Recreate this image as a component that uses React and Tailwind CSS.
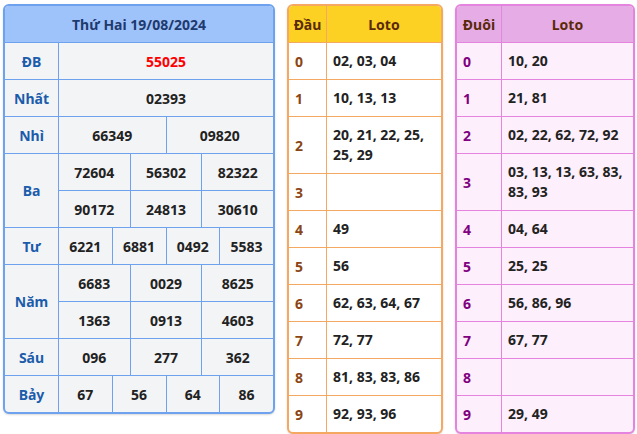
const font = { fontFamily: '"Noto Sans", "Open Sans", sans-serif' };

const prizes = [
  { label: 'ĐB', rows: [['55025']], red: true },
  { label: 'Nhất', rows: [['02393']] },
  { label: 'Nhì', rows: [['66349', '09820']] },
  { label: 'Ba', rows: [['72604', '56302', '82322'], ['90172', '24813', '30610']] },
  { label: 'Tư', rows: [['6221', '6881', '0492', '5583']] },
  { label: 'Năm', rows: [['6683', '0029', '8625'], ['1363', '0913', '4603']] },
  { label: 'Sáu', rows: [['096', '277', '362']] },
  { label: 'Bảy', rows: [['67', '56', '64', '86']] },
];

const dau = [
  '02, 03, 04', '10, 13, 13', '20, 21, 22, 25, 25, 29', '', '49',
  '56', '62, 63, 64, 67', '72, 77', '81, 83, 83, 86', '92, 93, 96',
];

const duoi = [
  '10, 20', '21, 81', '02, 22, 62, 72, 92', '03, 13, 13, 63, 83, 83, 93', '04, 64',
  '25, 25', '56, 86, 96', '67, 77', '', '29, 49',
];

function ResultTable() {
  return (
    <div className="w-[272px] border-2 border-[#6ea1ee] rounded-md overflow-hidden bg-[#f3f4f6] shadow-[0_1px_2px_rgba(0,0,0,0.15)]">
      <div className="h-[37px] flex items-center justify-center bg-[#9ec2fa] border-b border-[#6ea1ee] text-[14px] font-bold text-[#1e3a6e]">
        Thứ Hai 19/08/2024
      </div>
      {prizes.map((p, i) => (
        <div key={p.label} className={`flex ${i < prizes.length - 1 ? 'border-b border-[#6ea1ee]' : ''}`}>
          <div className="w-[54px] shrink-0 border-r border-[#6ea1ee] flex items-center justify-center text-[14px] font-bold text-[#1b5cab]">
            {p.label}
          </div>
          <div className="flex-1 flex flex-col">
            {p.rows.map((r, ri) => (
              <div key={ri} className={`flex h-[36px] ${ri < p.rows.length - 1 ? 'border-b border-[#6ea1ee] h-[37px]' : ''}`}>
                {r.map((n, ni) => (
                  <div
                    key={ni}
                    className={`flex-1 flex items-center justify-center text-[14px] font-bold ${p.red ? 'text-[#ff0000]' : 'text-[#222]'} ${ni < r.length - 1 ? 'border-r border-[#6ea1ee]' : ''}`}
                  >
                    {n}
                  </div>
                ))}
              </div>
            ))}
          </div>
        </div>
      ))}
    </div>
  );
}

function LotoTable({ title, data, width, col1, border, headBg, bodyBg, numColor }) {
  return (
    <div className={`${width} border-2 ${border} rounded-md overflow-hidden ${bodyBg} shadow-[0_1px_2px_rgba(0,0,0,0.15)]`}>
      <div className={`flex h-[37px] ${headBg} border-b ${border} text-[14px] font-bold text-[#5a2a08]`}>
        <div className={`${col1} shrink-0 border-r ${border} flex items-center justify-center`}>{title}</div>
        <div className="flex-1 flex items-center justify-center">Loto</div>
      </div>
      {data.map((v, i) => (
        <div key={i} className={`flex ${i < data.length - 1 ? `border-b ${border}` : ''}`}>
          <div className={`${col1} shrink-0 border-r ${border} flex items-center pl-[6px] text-[14px] font-bold ${numColor}`}>{i}</div>
          <div className="flex-1 px-[6px] py-[8px] min-h-[36px] text-[14px] leading-[20px] font-bold text-[#222]">{v}</div>
        </div>
      ))}
    </div>
  );
}

export default function App() {
  return (
    <div className="flex items-start gap-[12px] pl-[3px] pt-[4px] bg-white w-[637px] h-[434px]" style={font}>
      <ResultTable />
      <LotoTable
        title="Đầu"
        data={dau}
        width="w-[156px]"
        col1="w-[38px]"
        border="border-[#f4a862]"
        headBg="bg-[#fdd124]"
        bodyBg="bg-white"
        numColor="text-[#8b4513]"
      />
      <LotoTable
        title="Đuôi"
        data={duoi}
        width="w-[180px]"
        col1="w-[45px]"
        border="border-[#e484de]"
        headBg="bg-[#e6ace6]"
        bodyBg="bg-[#fdeffb]"
        numColor="text-[#800080]"
      />
    </div>
  );
}
